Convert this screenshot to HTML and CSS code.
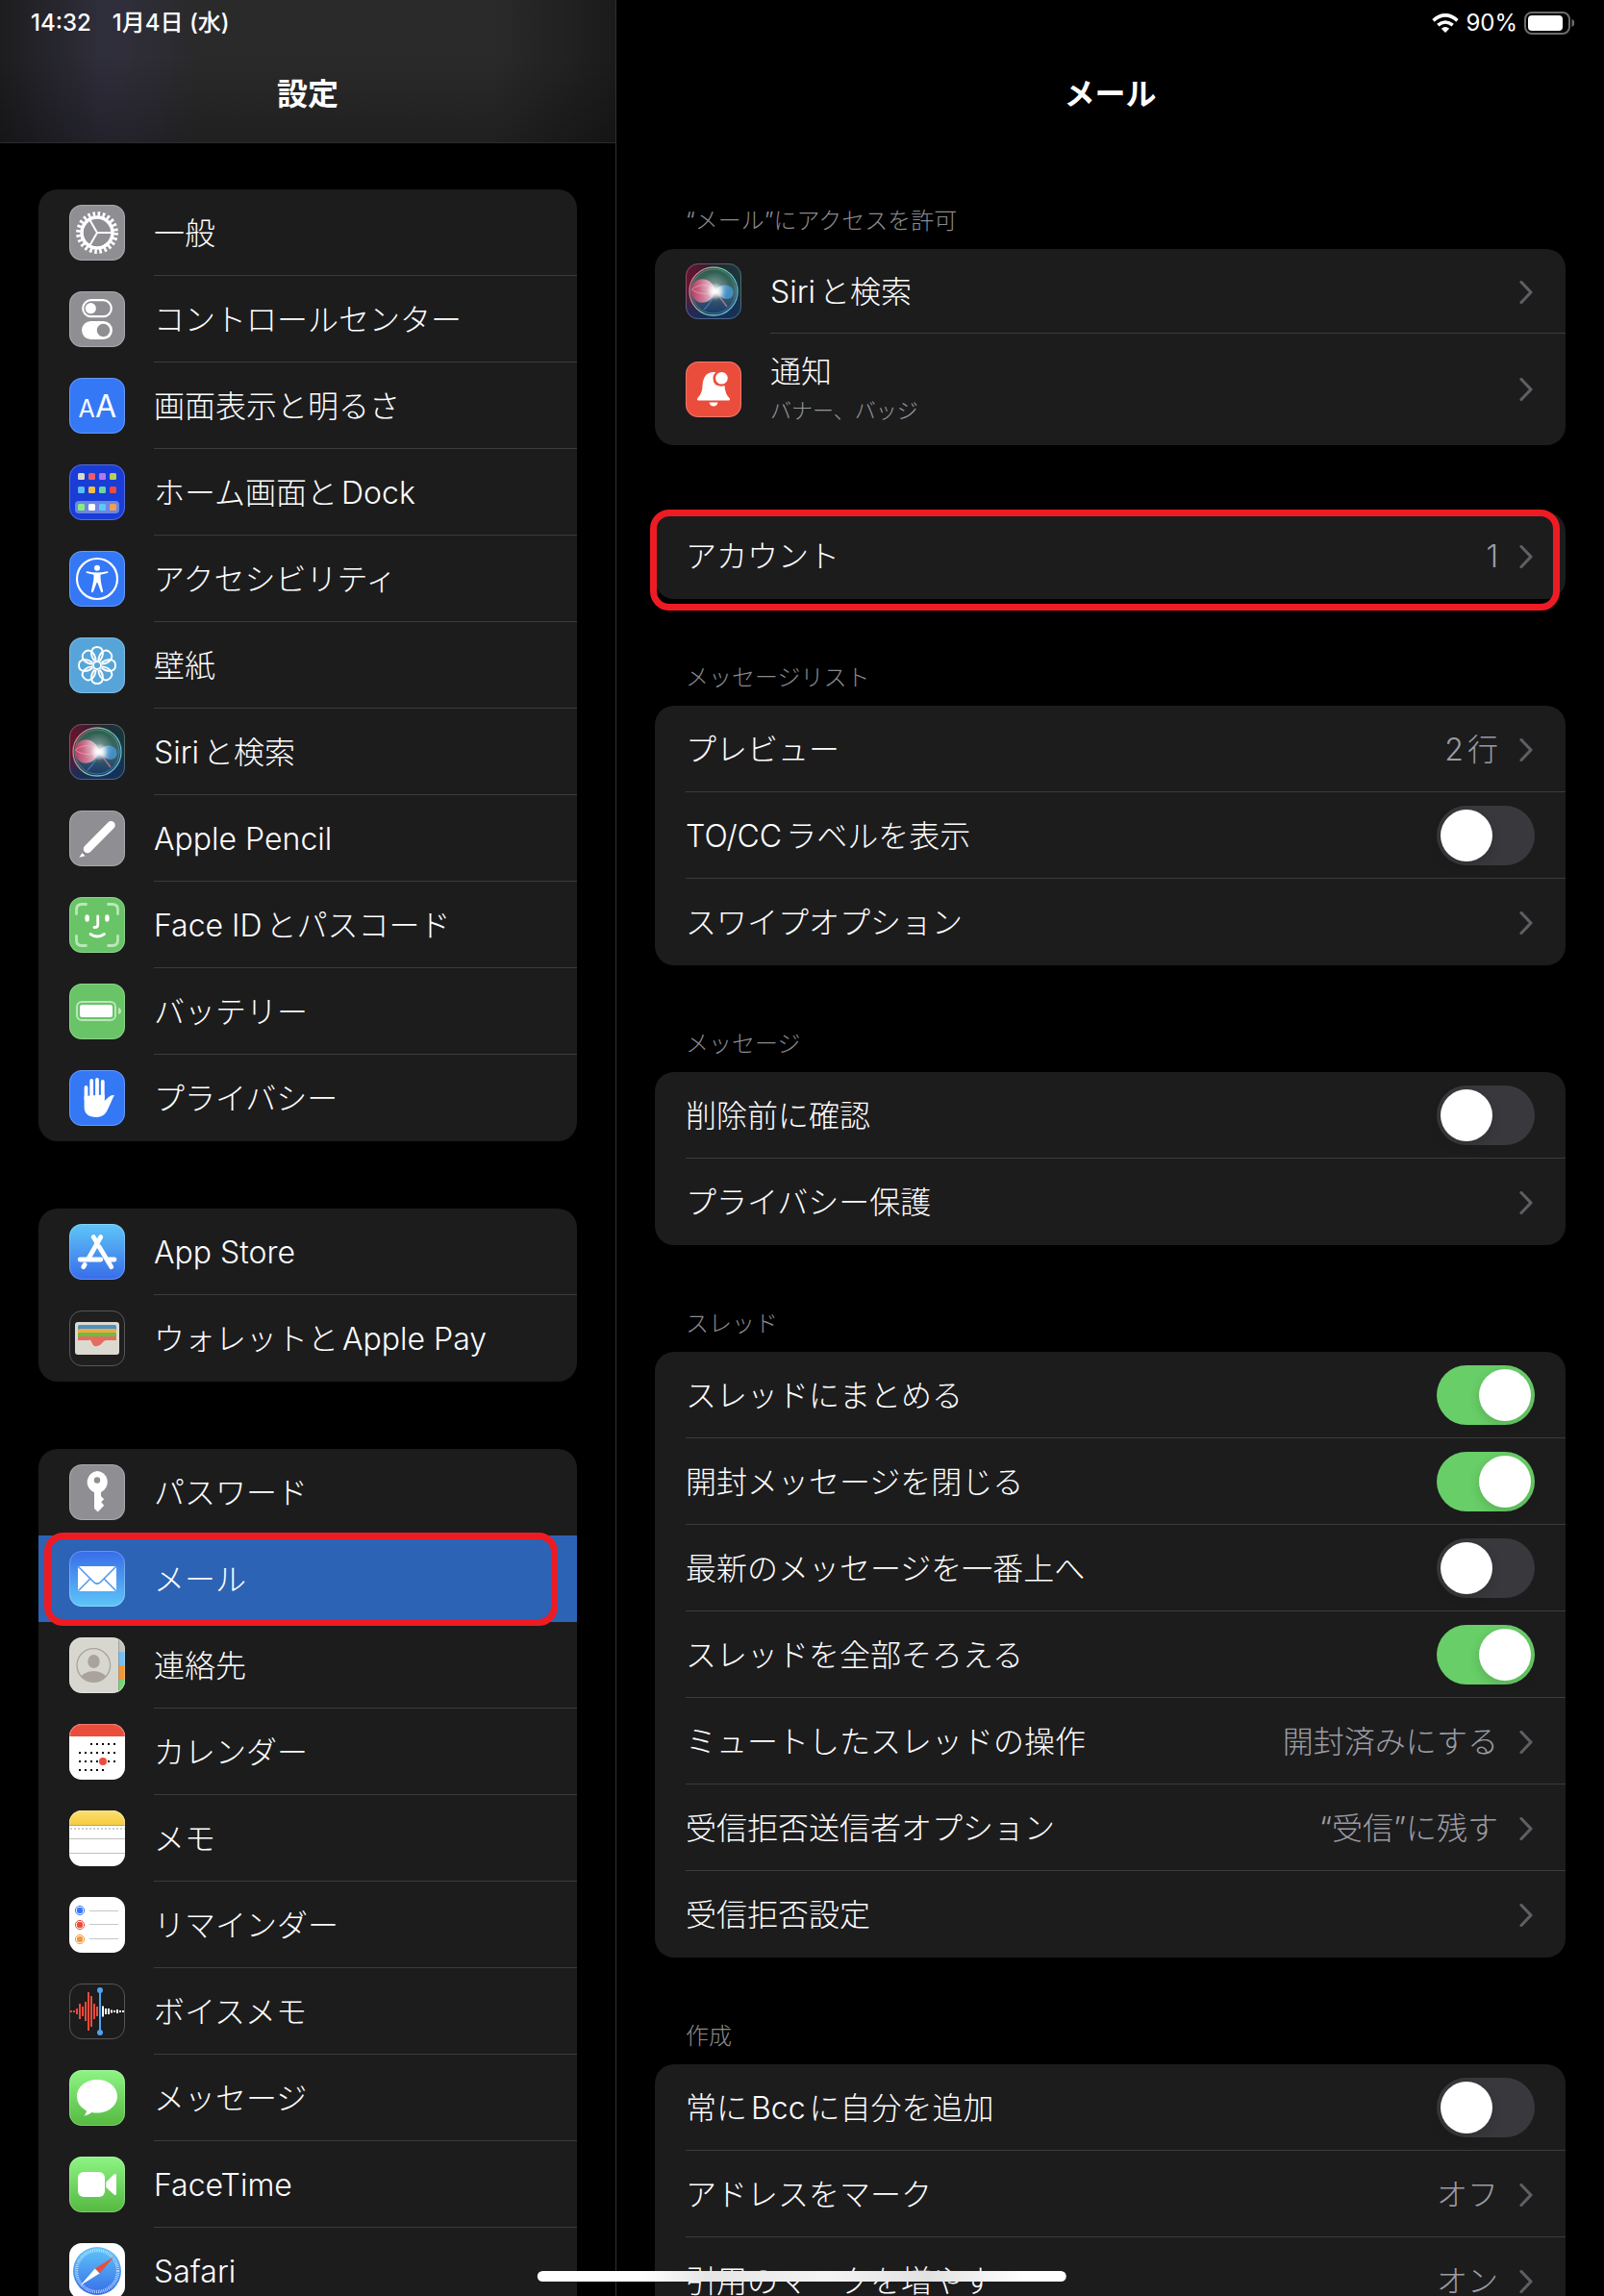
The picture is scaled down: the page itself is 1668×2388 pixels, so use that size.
FILE: index.html
```html
<!DOCTYPE html>
<html lang="ja">

<head>
  <meta charset="utf-8">
  <meta name="viewport" content="width=device-width, initial-scale=1">
  <title>設定 - メール</title>
  <link rel="stylesheet" href="styles.css">
</head>

<body>
  <!-- shared icons -->
  <svg class="defs" width="0" height="0" aria-hidden="true">
    <defs>
      <radialGradient id="siriBlob" cx="0.5" cy="0.5" r="0.5">
        <stop offset="0" stop-color="#fff"/>
        <stop offset="0.3" stop-color="#fff" stop-opacity="0.85"/>
        <stop offset="1" stop-color="#fff" stop-opacity="0"/>
      </radialGradient>
      <linearGradient id="siriBg" x1="0" y1="0" x2="1" y2="0">
        <stop offset="0" stop-color="#681530"/>
        <stop offset="0.45" stop-color="#2c2030"/>
        <stop offset="1" stop-color="#173a3c"/>
      </linearGradient>
      <linearGradient id="siriBottom" x1="0" y1="0" x2="0" y2="1">
        <stop offset="0.5" stop-color="#14305e" stop-opacity="0"/>
        <stop offset="1" stop-color="#14305e"/>
      </linearGradient>
      <linearGradient id="siriOrb" x1="0" y1="0" x2="0" y2="1">
        <stop offset="0" stop-color="#2b6a54"/>
        <stop offset="0.5" stop-color="#44706c"/>
        <stop offset="1" stop-color="#1a3a70"/>
      </linearGradient>
      <linearGradient id="siriRing" x1="0" y1="0.3" x2="1" y2="0.7">
        <stop offset="0" stop-color="#e0748c"/>
        <stop offset="0.5" stop-color="#6fc8a4"/>
        <stop offset="1" stop-color="#62b4e8"/>
      </linearGradient>
      <linearGradient id="siriPink" x1="0" y1="0" x2="1" y2="0">
        <stop offset="0" stop-color="#c83c64"/>
        <stop offset="1" stop-color="#f0c8d8"/>
      </linearGradient>
      <linearGradient id="siriBlue" x1="0" y1="0" x2="1" y2="0">
        <stop offset="0" stop-color="#bfe0f4"/>
        <stop offset="0.6" stop-color="#4592cc"/>
      </linearGradient>
      <linearGradient id="blueDown" x1="0" y1="0" x2="0" y2="1">
        <stop offset="0" stop-color="#5ec6f8"/>
        <stop offset="1" stop-color="#386ce9"/>
      </linearGradient>
      <linearGradient id="blueUp" x1="0" y1="0" x2="0" y2="1">
        <stop offset="0" stop-color="#386ce9"/>
        <stop offset="1" stop-color="#5ec6f8"/>
      </linearGradient>
      <linearGradient id="greenDown" x1="0" y1="0" x2="0" y2="1">
        <stop offset="0" stop-color="#8df584"/>
        <stop offset="1" stop-color="#55b840"/>
      </linearGradient>
      <linearGradient id="yellowDown" x1="0" y1="0" x2="0" y2="1">
        <stop offset="0" stop-color="#fbdf72"/>
        <stop offset="1" stop-color="#f6cd3f"/>
      </linearGradient>
      <clipPath id="contactClip"><circle cx="25.3" cy="29" r="17"/></clipPath>
    </defs>
    <symbol id="siri" viewBox="0 0 58 58">
      <rect width="58" height="58" fill="url(#siriBg)"/>
      <rect width="58" height="58" fill="url(#siriBottom)"/>
      <circle cx="29" cy="29" r="24" fill="url(#siriOrb)" opacity="0.85"/>
      <circle cx="29" cy="29" r="25" fill="none" stroke="url(#siriRing)" stroke-width="1.3"/>
      <circle cx="29" cy="29" r="23" fill="none" stroke="url(#siriRing)" stroke-width="0.7" opacity="0.6"/>
      <path d="M31 29C28 13 8 12 6.500 27 5 44 26 46 31 29z" fill="url(#siriPink)" opacity="0.9"/>
      <path d="M31 29c4-9 17-8 18.500 0S40 42 31 29z" fill="url(#siriBlue)" opacity="0.9"/>
      <path d="M31 29C22 18 10 24 6.500 27 12 32 24 33 31 29z" fill="none" stroke="#ffa6bc" stroke-width="0.800" opacity="0.8"/>
      <path d="M30 30c-1 7-6 13-11 18" stroke="#4f8fe0" stroke-width="1.500" fill="none" opacity="0.6"/>
      <path d="M31 29l12 16" stroke="#f08cae" stroke-width="1.600" fill="none" opacity="0.6"/>
      <circle cx="30" cy="25" r="16" fill="url(#siriBlob)" opacity="0.35"/>
      <circle cx="31" cy="29" r="9" fill="url(#siriBlob)"/>
    </symbol>
    <symbol id="chevron" viewBox="0 0 14 24">
      <path d="M2 1.5L12 12 2 22.5" fill="none" stroke="#5e5e63" stroke-width="3.2" stroke-linecap="round" stroke-linejoin="round"/>
    </symbol>
  </svg>

  <div class="screen">
    <nav class="sidebar">
      <header class="bar bar-side">
        <div class="status"><span>14:32</span><span>1月4日 (水)</span></div>
        <h1>設定</h1>
      </header>
      <div class="side-list">
        <div class="group">
          <a class="row" href="#">
            <svg class="icon gray" viewBox="0 0 58 58">
              <g fill="none" stroke="#fff">
                <circle cx="29" cy="29" r="16" stroke-width="3.6"/>
                <circle cx="29" cy="29" r="19.6" stroke-width="4.6" stroke-dasharray="2.6 2.5313"/>
                <path d="M29 29H44M29 29L21.5 16M29 29L21.5 42" stroke-width="2"/>
              </g>
            </svg>
            <span class="body">一般</span>
          </a>
          <a class="row" href="#">
            <svg class="icon gray" viewBox="0 0 58 58">
              <rect x="14.2" y="9.2" width="29.6" height="17" rx="8.5" fill="none" stroke="#fff" stroke-width="2.2"/>
              <circle cx="22.3" cy="17.7" r="5.6" fill="#fff"/>
              <rect x="13" y="31" width="32" height="19" rx="9.5" fill="#fff"/>
              <circle cx="35.5" cy="40.5" r="6.7" fill="#8e8e93"/>
            </svg>
            <span class="body">コントロールセンター</span>
          </a>
          <a class="row" href="#">
            <svg class="icon blue" viewBox="0 0 58 58">
              <g fill="#fff" font-family="Inter, sans-serif" font-weight="400" text-anchor="middle">
                <text x="18" y="41" font-size="25">A</text>
                <text x="38" y="41" font-size="32">A</text>
              </g>
            </svg>
            <span class="body">画面表示と明るさ</span>
          </a>
          <a class="row" href="#">
            <svg class="icon" viewBox="0 0 58 58">
              <rect width="58" height="58" fill="#193dd6"/>
              <rect x="6" y="38" width="46" height="13" rx="4" fill="#6c86e4"/>
              <rect x="9" y="9" width="7" height="7" rx="1.5" fill="#d8d8d0"/>
              <rect x="20" y="9" width="7" height="7" rx="1.5" fill="#ea5c68"/>
              <rect x="31" y="9" width="7" height="7" rx="1.5" fill="#b278f0"/>
              <rect x="42" y="9" width="7" height="7" rx="1.5" fill="#b9cf52"/>
              <rect x="9" y="23" width="7" height="7" rx="1.5" fill="#5cbcf8"/>
              <rect x="20" y="23" width="7" height="7" rx="1.5" fill="#f4c043"/>
              <rect x="31" y="23" width="7" height="7" rx="1.5" fill="#6cd3a4"/>
              <rect x="42" y="23" width="7" height="7" rx="1.5" fill="#e84d3d"/>
              <rect x="9" y="41" width="7" height="7" rx="1.5" fill="#86ee7c"/>
              <rect x="20" y="41" width="7" height="7" rx="1.5" fill="#fff"/>
              <rect x="31" y="41" width="7" height="7" rx="1.5" fill="#5ec8f8"/>
              <rect x="42" y="41" width="7" height="7" rx="1.5" fill="#f0a056"/>
            </svg>
            <span class="body">ホーム画面とDock</span>
          </a>
          <a class="row" href="#">
            <svg class="icon blue" viewBox="0 0 58 58">
              <circle cx="29" cy="29" r="21" fill="none" stroke="#fff" stroke-width="2.2"/>
              <circle cx="29" cy="17.8" r="3" fill="#fff"/>
              <path d="M18.6 21.2c7 1.6 13.800 1.600 20.800 0 1.200-.2 1.400 1.500.3 1.900l-7.200 1.700c0 5 .3 7.400 2.600 17 .3 1.300-1.600 1.900-2.100.6L29.400 33h-.8l-3.600 9.400c-.5 1.300-2.400.7-2.100-.6 2.300-9.600 2.600-12 2.600-17l-7.200-1.700c-1.100-.4-.9-2.100.3-1.900z" fill="#fff"/>
            </svg>
            <span class="body">アクセシビリティ</span>
          </a>
          <a class="row" href="#">
            <svg class="icon" viewBox="0 0 58 58">
              <rect width="58" height="58" fill="#57a5d8"/>
              <g fill="none" stroke="#fff" stroke-width="1.9" transform="translate(29 29)">
                <circle r="4"/>
                <path id="petal" d="M-2.500-4.500C-7.500-10-7.200-19 0-19S7.500-10 2.500-4.500"/>
                <use href="#petal" transform="rotate(45)"/>
                <use href="#petal" transform="rotate(90)"/>
                <use href="#petal" transform="rotate(135)"/>
                <use href="#petal" transform="rotate(180)"/>
                <use href="#petal" transform="rotate(225)"/>
                <use href="#petal" transform="rotate(270)"/>
                <use href="#petal" transform="rotate(315)"/>
              </g>
            </svg>
            <span class="body">壁紙</span>
          </a>
          <a class="row" href="#">
            <svg class="icon"><use href="#siri"/></svg>
            <span class="body">Siriと検索</span>
          </a>
          <a class="row" href="#">
            <svg class="icon gray" viewBox="0 0 58 58">
              <path d="M43.500 15.200L19 40" stroke="#fff" stroke-width="8.500" stroke-linecap="round"/>
              <path d="M13.500 44l3.200 3.200-6.400 1.600zM13.300 40.300l5.600 5.600" fill="#fff"/>
              <path d="M12.600 42.200l5 5" stroke="#8e8e93" stroke-width="1.200"/>
            </svg>
            <span class="body">Apple Pencil</span>
          </a>
          <a class="row" href="#">
            <svg class="icon green" viewBox="0 0 58 58">
              <path d="M7.500 17.500V13q0-5.500 5.500-5.500h4.500M40.500 7.500H45q5.500 0 5.500 5.500v4.500M50.500 40.500V45q0 5.500-5.500 5.500h-4.500M17.500 50.500H13q-5.500 0-5.500-5.500v-4.500" fill="none" stroke="#bbe6ba" stroke-width="2.800" stroke-linecap="round"/>
              <path d="M18.600 20.500v3M39.400 20.500v3" stroke="#fff" stroke-width="4.400" stroke-linecap="round"/>
              <path d="M29.700 20v9q0 2.500-3 2.500h-.7M22 38.500q7 5 14.500 0" fill="none" stroke="#fff" stroke-width="2.800" stroke-linecap="round"/>
            </svg>
            <span class="body">Face IDとパスコード</span>
          </a>
          <a class="row" href="#">
            <svg class="icon green" viewBox="0 0 58 58">
              <rect x="8" y="19" width="40" height="19" rx="5" fill="none" stroke="#bbe6ba" stroke-width="2"/>
              <rect x="11" y="22" width="34" height="13" rx="2.500" fill="#fff"/>
              <path d="M51 25q3 1 3 3.500T51 32z" fill="#bbe6ba"/>
            </svg>
            <span class="body">バッテリー</span>
          </a>
          <a class="row" href="#">
            <svg class="icon blue" viewBox="0 0 58 58">
              <path d="M17.500 18v12M23.200 11v18M29 10v18M34.800 12v18" stroke="#fff" stroke-width="3.800" stroke-linecap="round"/>
              <path d="M15.600 27L36.700 25.500V32L41 28Q44 25.500 47 26.200 45.500 28 43 34.500L39.500 42Q36 49 28.500 49 15.600 49 15.600 38z" fill="#fff"/>
            </svg>
            <span class="body">プライバシー</span>
          </a>
        </div>

        <div class="group">
          <a class="row" href="#">
            <svg class="icon" viewBox="0 0 58 58">
              <rect width="58" height="58" fill="url(#blueDown)"/>
              <path d="M32.800 13.500L20 36M25.200 13.500l3 5M31 23.500l12.800 21.300M11.200 37h21.600M41 37h6M16.200 42.300l-1.500 2.500" stroke="#fff" stroke-width="4.800" stroke-linecap="round" fill="none"/>
            </svg>
            <span class="body">App Store</span>
          </a>
          <a class="row" href="#">
            <svg class="icon" viewBox="0 0 58 58">
              <rect width="58" height="58" fill="#1f1f20"/>
              <rect x="6" y="12" width="46" height="34" rx="3" fill="#dcdad0"/>
              <rect x="9" y="15" width="40" height="6" rx="1.500" fill="#4f90c4"/>
              <rect x="9" y="19" width="40" height="6" rx="1.500" fill="#eeab3d"/>
              <rect x="9" y="23" width="40" height="6" rx="1.500" fill="#70bb46"/>
              <path d="M9 28.500q0-1.500 1.500-1.500h37q1.500 0 1.500 1.500V31H38q-2 0-3.500 2.500T29 37t-5.500-3.500T20 31H9z" fill="#e46d5f"/>
            </svg>
            <span class="body">ウォレットとApple Pay</span>
          </a>
        </div>

        <div class="group">
          <a class="row plain" href="#">
            <svg class="icon gray" viewBox="0 0 58 58">
              <path d="M29 7a11.500 11.500 0 0 1 4 22v4l3.200 3.300-3 3 3 3.500L29.800 49.500 26 46V29.200A11.500 11.500 0 0 1 29 7z" fill="#fff"/>
              <circle cx="29" cy="16.500" r="3.200" fill="#8e8e93"/>
            </svg>
            <span class="body">パスワード</span>
          </a>
          <a class="row plain selected" href="#" aria-current="page">
            <svg class="icon" viewBox="0 0 58 58">
              <rect width="58" height="58" fill="url(#blueUp)"/>
              <rect x="9" y="16" width="40" height="26" rx="1.500" fill="#fff"/>
              <path d="M9 16l16.500 16.500q3.500 3.300 7 0L49 16M9.500 41.500L21.800 29M48.500 41.500L36.200 29" fill="none" stroke="#4a96f0" stroke-width="1.500"/>
            </svg>
            <span class="body">メール</span>
            <span class="marker marker-side"></span>
          </a>
          <a class="row" href="#">
            <svg class="icon" viewBox="0 0 58 58">
              <rect width="58" height="58" fill="#d7d7cf"/>
              <g clip-path="url(#contactClip)" fill="#aaa29c">
                <ellipse cx="25.500" cy="25" rx="6.200" ry="7"/>
                <ellipse cx="25.300" cy="44" rx="14" ry="9"/>
              </g>
              <circle cx="25.300" cy="29" r="17.300" fill="none" stroke="#aaa29c" stroke-width="1.300"/>
              <path d="M51 0h7v15h-7z" fill="#c3c3bb"/>
              <path d="M51 15h7v14h-7z" fill="#76c0f2"/>
              <path d="M51 29h7v15h-7z" fill="#f09937"/>
              <path d="M51 44h7v14h-7z" fill="#76d672"/>
              <path d="M51.500 0v58" stroke="#8c8c84" stroke-width="1" opacity="0.6"/>
            </svg>
            <span class="body">連絡先</span>
          </a>
          <a class="row" href="#">
            <svg class="icon" viewBox="0 0 58 58">
              <rect width="58" height="58" fill="#fff"/>
              <rect width="58" height="13" fill="#eb4d3d"/>
              <path d="M22 21h27M10 30h39M10 39h39M10 48h27" stroke="#000" stroke-width="2" stroke-dasharray="2 4"/>
              <circle cx="35" cy="39" r="4" fill="#eb4d3d"/>
            </svg>
            <span class="body">カレンダー</span>
          </a>
          <a class="row" href="#">
            <svg class="icon" viewBox="0 0 58 58">
              <rect width="58" height="58" fill="#fff"/>
              <rect width="58" height="15" fill="url(#yellowDown)"/>
              <path d="M0 15.500h58" stroke="#a3a3a3"/>
              <path d="M1 19h57" stroke="#cfcfcf" stroke-width="2" stroke-dasharray="2 2"/>
              <path d="M0 29.500h58M0 44.500h58" stroke="#c0c0c2"/>
            </svg>
            <span class="body">メモ</span>
          </a>
          <a class="row" href="#">
            <svg class="icon" viewBox="0 0 58 58">
              <rect width="58" height="58" fill="#fff"/>
              <g stroke-width="1" fill="none">
                <circle cx="11" cy="14" r="4.600" stroke="#3478f6"/>
                <circle cx="11" cy="29" r="4.600" stroke="#eb4d3d"/>
                <circle cx="11" cy="44" r="4.600" stroke="#f09a37"/>
              </g>
              <circle cx="11" cy="14" r="3.200" fill="#3478f6"/>
              <circle cx="11" cy="29" r="3.200" fill="#eb4d3d"/>
              <circle cx="11" cy="44" r="3.200" fill="#f09a37"/>
              <path d="M21 14.500h30M21 28.500h30M21 43.500h30" stroke="#c6c6c8"/>
            </svg>
            <span class="body">リマインダー</span>
          </a>
          <a class="row" href="#">
            <svg class="icon" viewBox="0 0 58 58">
              <rect width="58" height="58" fill="#1c1c1d"/>
              <path d="M2 28v2M5 28v2M8 26v6M11 21v16M14 24v10M17 19v20M20 9v40M23 13v32M26 21v16M29 24v10" stroke="#e74b3b" stroke-width="2"/>
              <path d="M35 23.500v11M38 26v6M41 26v6M44 27.500v3M47 28v2M50 27v4M53 28v2M56 28v2" stroke="#fff" stroke-width="2"/>
              <path d="M32 7v44" stroke="#4da3f0" stroke-width="2"/>
              <circle cx="32" cy="7" r="3" fill="#4da3f0"/>
              <circle cx="32" cy="51" r="3" fill="#4da3f0"/>
            </svg>
            <span class="body">ボイスメモ</span>
          </a>
          <a class="row" href="#">
            <svg class="icon" viewBox="0 0 58 58">
              <rect width="58" height="58" fill="url(#greenDown)"/>
              <path d="M29 10c11.800 0 21 7.500 21 17.300S40.800 44.600 29 44.600q-3 0-5.600-.5-3.400 3.100-8 3.700 2.400-2.300 2.600-5.400Q8 37.300 8 27.300C8 17.500 17.200 10 29 10z" fill="#fff"/>
            </svg>
            <span class="body">メッセージ</span>
          </a>
          <a class="row" href="#">
            <svg class="icon" viewBox="0 0 58 58">
              <rect width="58" height="58" fill="url(#greenDown)"/>
              <rect x="9" y="16" width="28" height="26" rx="6" fill="#fff"/>
              <path d="M38.300 26.500L46.500 18.500Q49 17 49 19.500v19q0 2.500-2.500 1L38.300 32z" fill="#fff"/>
            </svg>
            <span class="body">FaceTime</span>
          </a>
          <a class="row" href="#">
            <svg class="icon" viewBox="0 0 58 58">
              <rect width="58" height="58" fill="#fff"/>
              <circle cx="29" cy="29" r="25" fill="url(#blueDown)"/>
              <circle cx="29" cy="29" r="21.500" fill="none" stroke="#d6ecff" stroke-width="3.400" stroke-dasharray="0.700 1.176"/>
              <path d="M46.700 14L31.600 31.400 26.800 26.400z" fill="#eb4d3d"/>
              <path d="M11.500 44L26.800 26.400 31.600 31.400z" fill="#fff"/>
            </svg>
            <span class="body">Safari</span>
          </a>
        </div>
      </div>
    </nav>

    <main class="detail">
      <header class="bar">
        <div class="status status-right">
          <svg class="wifi" viewBox="0 0 28 20">
            <path d="M14 20l-4.200-4.300q4.200-3.400 8.400 0z" fill="#fff"/>
            <path d="M1.500 7.300q12.500-11 25 0M6.300 12.200q7.700-6.400 15.400 0" fill="none" stroke="#fff" stroke-width="3.600"/>
          </svg>
          <span>90%</span>
          <svg class="battery" viewBox="0 0 52 24">
            <rect x="1" y="1" width="46" height="22" rx="7" fill="none" stroke="#6c6c6f" stroke-width="2"/>
            <rect x="4" y="4" width="36" height="16" rx="4" fill="#fff"/>
            <path d="M49.500 8q3 1 3 4t-3 4z" fill="#6c6c6f"/>
          </svg>
        </div>
        <h2>メール</h2>
      </header>
      <div class="detail-list">
        <section>
          <h3>“メール”にアクセスを許可</h3>
          <div class="group">
            <a class="row row-app" href="#">
              <svg class="icon"><use href="#siri"/></svg>
              <span class="body">Siriと検索 <svg class="chevron"><use href="#chevron"/></svg></span>
            </a>
            <a class="row row-tall" href="#">
              <svg class="icon red" viewBox="0 0 58 58">
                <path d="M29 11q1.500 0 2.500.3-3 2.300-3 6.200 0 8 8.500 8.200 2 0 3.500-.8.500 8.600 5 13.100 1.500 2.500-1 2.500h-31q-2.500 0-1-2.500 5-5 5-13Q18.500 11 29 11z" fill="#fff"/>
                <circle cx="37.400" cy="17.300" r="6.300" fill="#fff"/>
                <path d="M24.500 42.500h9q-.8 4-4.500 4t-4.500-4z" fill="#fff"/>
              </svg>
              <span class="body">
                <span class="stack"><span>通知</span><small>バナー、バッジ</small></span>
                <svg class="chevron"><use href="#chevron"/></svg>
              </span>
            </a>
          </div>
        </section>

        <section>
          <div class="group">
            <a class="row" href="#">
              <span class="body">アカウント <span class="value">1</span><svg class="chevron"><use href="#chevron"/></svg></span>
              <span class="marker marker-main"></span>
            </a>
          </div>
        </section>

        <section>
          <h3>メッセージリスト</h3>
          <div class="group">
            <a class="row" href="#"><span class="body">プレビュー <span class="value">2行</span><svg class="chevron"><use href="#chevron"/></svg></span></a>
            <label class="row"><span class="body">TO/CCラベルを表示</span><input class="switch" type="checkbox"></label>
            <a class="row" href="#"><span class="body">スワイプオプション <svg class="chevron"><use href="#chevron"/></svg></span></a>
          </div>
        </section>

        <section>
          <h3>メッセージ</h3>
          <div class="group">
            <label class="row"><span class="body">削除前に確認</span><input class="switch" type="checkbox"></label>
            <a class="row" href="#"><span class="body">プライバシー保護 <svg class="chevron"><use href="#chevron"/></svg></span></a>
          </div>
        </section>

        <section>
          <h3>スレッド</h3>
          <div class="group">
            <label class="row"><span class="body">スレッドにまとめる</span><input class="switch" type="checkbox" checked></label>
            <label class="row"><span class="body">開封メッセージを閉じる</span><input class="switch" type="checkbox" checked></label>
            <label class="row"><span class="body">最新のメッセージを一番上へ</span><input class="switch" type="checkbox"></label>
            <label class="row"><span class="body">スレッドを全部そろえる</span><input class="switch" type="checkbox" checked></label>
            <a class="row" href="#"><span class="body">ミュートしたスレッドの操作 <span class="value">開封済みにする</span><svg class="chevron"><use href="#chevron"/></svg></span></a>
            <a class="row" href="#"><span class="body">受信拒否送信者オプション <span class="value">“受信”に残す</span><svg class="chevron"><use href="#chevron"/></svg></span></a>
            <a class="row" href="#"><span class="body">受信拒否設定 <svg class="chevron"><use href="#chevron"/></svg></span></a>
          </div>
        </section>

        <section>
          <h3>作成</h3>
          <div class="group">
            <label class="row"><span class="body">常にBccに自分を追加</span><input class="switch" type="checkbox"></label>
            <a class="row" href="#"><span class="body">アドレスをマーク <span class="value">オフ</span><svg class="chevron"><use href="#chevron"/></svg></span></a>
            <a class="row" href="#"><span class="body">引用のマークを増やす <span class="value">オン</span><svg class="chevron"><use href="#chevron"/></svg></span></a>
          </div>
        </section>
      </div>
    </main>
  </div>
  <div class="home-indicator"></div>
</body>

</html>
```
FILE: styles.css
```css
* {
  box-sizing: border-box;
}

body {
  margin: 0;
  background: #000;
  color: #fff;
  font-family: Inter, "Noto Sans CJK JP", sans-serif;
  font-size: 32px;
  font-weight: 300;
  line-height: 40px;
  text-autospace: normal;
}

.defs {
  position: absolute;
}

.screen {
  display: grid;
  grid-template-columns: 641px 1fr;
  height: 100vh;
  overflow: hidden;
}

.sidebar,
.detail {
  display: flex;
  flex-direction: column;
  min-width: 0;
  min-height: 0;
}

.sidebar {
  border-right: 1px solid #2f2f31;
}

/* top bars */
.bar {
  flex: none;
}

.bar-side {
  border-bottom: 1px solid #2b2b2c;
  background:
    linear-gradient(to bottom, rgba(0, 0, 0, 0) 40%, rgba(0, 0, 0, 0.25)),
    linear-gradient(to right, #1d1d1f 0, #2e2d3a 16%, #2f2e3a 20%, #2a2a2b 32%, #2a2a2a 80%, #1b1b1b 100%);
}

.status {
  display: flex;
  align-items: center;
  gap: 22px;
  height: 48px;
  padding: 0 32px;
  font-size: 24px;
  font-weight: 500;
  text-autospace: no-autospace;
}

.status-right {
  justify-content: flex-end;
  gap: 7px;
  padding-right: 31px;
  font-weight: 400;
}

.wifi {
  width: 28px;
  height: 20px;
}

.battery {
  width: 52px;
  height: 24px;
}

h1,
h2 {
  margin: 0;
  font-size: 32px;
  font-weight: 600;
  line-height: 100px;
  text-align: center;
}

/* lists */
.side-list,
.detail-list {
  display: flex;
  flex-direction: column;
  gap: 70px;
  padding: 48px 40px;
  overflow-y: auto;
  scrollbar-width: none;
}

.side-list > *,
.detail-list > * {
  flex: none;
}

.detail-list {
  padding-top: 70px;
}

h3 {
  margin: 0;
  padding: 0 32px 17px;
  color: #8a8a90;
  font-size: 24px;
  font-weight: 300;
  line-height: 24px;
}

.group {
  border-radius: 20px;
  background: #1c1c1d;
}

.row {
  position: relative;
  display: flex;
  align-items: center;
  gap: 30px;
  min-height: 90px;
  padding-left: 32px;
  color: inherit;
  text-decoration: none;
}

.row-app {
  min-height: 88px;
}

.row-tall {
  min-height: 116px;
}

.body {
  display: flex;
  flex: 1;
  align-items: center;
  align-self: stretch;
  padding-top: 3px;
  padding-right: 34px;
  border-bottom: 1px solid #3b3b3d;
}

.row-tall .body {
  padding-top: 0;
}

.row:last-child .body,
.plain .body {
  border-bottom-color: transparent;
}

.selected {
  z-index: 1;
  background: #2c63b5;
}

.icon {
  flex: none;
  width: 58px;
  height: 58px;
  border-radius: 13px;
  outline: 1px solid rgba(255, 255, 255, 0.25);
  outline-offset: -1px;
  overflow: hidden;
}

.gray {
  background: #8e8e93;
}

.blue {
  background: #3478f6;
}

.green {
  background: #68c466;
}

.red {
  background: #eb4d3d;
}

.stack {
  display: flex;
  flex-direction: column;
  gap: 4px;
}

.stack small {
  color: #98989f;
  font-size: 22px;
  line-height: 32px;
}

.value {
  margin-left: auto;
  color: #9c9ca3;
}

.chevron {
  width: 14px;
  height: 24px;
  margin-left: auto;
}

.value + .chevron {
  margin-left: 22px;
}

/* the switch lies over the row, so the line below runs to the edge */
.switch {
  position: absolute;
  top: 14px;
  right: 32px;
  appearance: none;
  width: 102px;
  height: 62px;
  margin: 0;
  padding: 4px;
  border-radius: 31px;
  background: #39393d;
}

.switch::before {
  content: "";
  display: block;
  width: 54px;
  height: 54px;
  border-radius: 50%;
  background: #fff;
  box-shadow: 0 4px 12px rgba(0, 0, 0, 0.15);
}

.switch:checked {
  background: #68ce67;
}

.switch:checked::before {
  margin-left: auto;
}

/* red frames round the items to tap */
.marker {
  position: absolute;
  border: 7px solid #ed1c24;
  border-radius: 20px;
  pointer-events: none;
}

.marker-side {
  inset: -3px 20px -4px 6px;
}

.marker-main {
  inset: -3px 6px -12px -5px;
}

.home-indicator {
  position: fixed;
  bottom: 15px;
  left: 50%;
  width: 33%;
  height: 11px;
  border-radius: 6px;
  background: linear-gradient(to right, #fff 20%, #e6e6e6 32%, #f4f4f4 55%, #e2e2e2 74%, #fff 92%);
  transform: translateX(-50%);
}
```
